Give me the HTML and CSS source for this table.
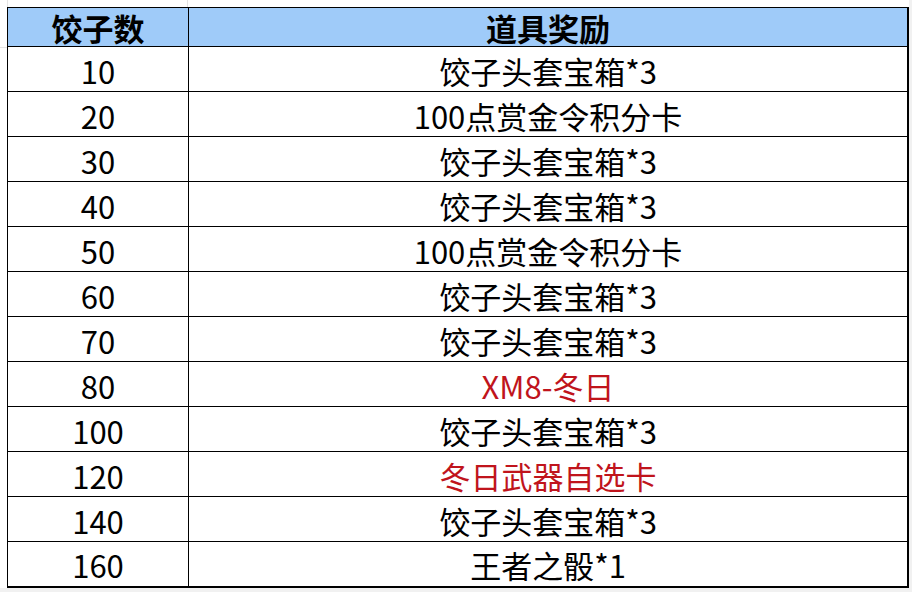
FILE: index.html
```html
<!DOCTYPE html>
<html lang="zh-CN">
<head>
<meta charset="utf-8">
<title>饺子数奖励</title>
<link rel="stylesheet" href="styles.css">
</head>
<body>
<table class="reward-table">
  <colgroup>
    <col class="col-count">
    <col class="col-reward">
  </colgroup>
  <thead>
    <tr class="head-row"><th>饺子数</th><th>道具奖励</th></tr>
  </thead>
  <tbody>
    <tr><td>10</td><td>饺子头套宝箱*3</td></tr>
    <tr><td>20</td><td>100点赏金令积分卡</td></tr>
    <tr><td>30</td><td>饺子头套宝箱*3</td></tr>
    <tr><td>40</td><td>饺子头套宝箱*3</td></tr>
    <tr><td>50</td><td>100点赏金令积分卡</td></tr>
    <tr><td>60</td><td>饺子头套宝箱*3</td></tr>
    <tr><td>70</td><td>饺子头套宝箱*3</td></tr>
    <tr><td>80</td><td class="red">XM8-冬日</td></tr>
    <tr><td>100</td><td>饺子头套宝箱*3</td></tr>
    <tr><td>120</td><td class="red">冬日武器自选卡</td></tr>
    <tr><td>140</td><td>饺子头套宝箱*3</td></tr>
    <tr><td>160</td><td>王者之骰*1</td></tr>
  </tbody>
</table>
</body>
</html>
```
FILE: styles.css
```css
html, body {
  margin: 0;
  padding: 0;
}
body {
  width: 912px;
  height: 592px;
  overflow: hidden;
  background-color: #ffffff;
  background-image:
    linear-gradient(#f1f1f1, #f1f1f1),
    linear-gradient(#f1f1f1, #f1f1f1),
    linear-gradient(#e4e4e4, #e4e4e4),
    linear-gradient(#e2e2e2, #e2e2e2),
    linear-gradient(#e4e4e4, #e4e4e4);
  background-size: 3px 592px, 912px 4px, 1px 592px, 1px 592px, 912px 1px;
  background-position: 909px 0, 0 588px, 7px 0, 187px 0, 0 47px;
  background-repeat: no-repeat;
  font-family: "Noto Sans CJK SC", "Noto Sans", sans-serif;
  color: #000;
}
.reward-table {
  margin: 7px 0 0 7px;
  border-collapse: collapse;
  table-layout: fixed;
  width: 902px;
  background: #fff;
  border-right: 2px solid #000;
  border-bottom: 2px solid #000;
}
.col-count { width: 181px; }
.reward-table th,
.reward-table td {
  border: 1px solid #000;
  padding: 0;
  text-align: center;
  vertical-align: middle;
  font-size: 31px;
  line-height: 1;
}
.reward-table th {
  height: 38px;
  font-weight: 700;
  background: #9fcbf9;
}
.reward-table td {
  height: 45px;
  font-weight: 400;
  padding-top: 2px;
  box-sizing: border-box;
}
.reward-table td.red {
  color: #c0141c;
}
.reward-table tr > :last-child {
  border-right: 2px solid #000;
}
.reward-table tbody tr:last-child td {
  border-bottom: 2px solid #000;
}
```
